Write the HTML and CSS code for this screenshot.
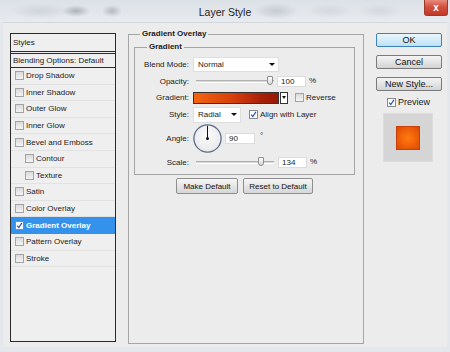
FILE: index.html
```html
<!DOCTYPE html>
<html>
<head>
<meta charset="utf-8">
<title>Layer Style</title>
<link rel="stylesheet" href="styles.css">
</head>
<body>
<div class="window">
  <div class="titlebar">
    <div class="tb-left"></div>
    <div class="title">Layer Style</div>
    <div class="close">x</div>
  </div>
  <div class="body">
    <div class="styles-list">
      <div class="head">Styles</div>
      <div class="blend">Blending Options: Default</div>
      <div class="item"><span class="cb"></span>Drop Shadow</div>
      <div class="item"><span class="cb"></span>Inner Shadow</div>
      <div class="item"><span class="cb"></span>Outer Glow</div>
      <div class="item"><span class="cb"></span>Inner Glow</div>
      <div class="item"><span class="cb"></span>Bevel and Emboss</div>
      <div class="item sub"><span class="cb"></span>Contour</div>
      <div class="item sub"><span class="cb"></span>Texture</div>
      <div class="item"><span class="cb"></span>Satin</div>
      <div class="item"><span class="cb"></span>Color Overlay</div>
      <div class="item sel"><span class="cb on"><svg viewBox="0 0 9 9" width="7" height="7"><path d="M1.5 4.8 L3.6 7.2 L7.6 1.2" fill="none" stroke="#2a4fb0" stroke-width="1.5"/></svg></span>Gradient Overlay</div>
      <div class="item"><span class="cb"></span>Pattern Overlay</div>
      <div class="item"><span class="cb"></span>Stroke</div>
    </div>

    <fieldset class="group outer">
      <legend>Gradient Overlay</legend>
      <fieldset class="group inner">
        <legend>Gradient</legend>
        <div class="frow r1">
          <span class="lbl">Blend Mode:</span>
          <div class="select blendsel"><span>Normal</span><span class="arrow"></span></div>
        </div>
        <div class="frow r2">
          <span class="lbl">Opacity:</span>
          <div class="slider"><span class="thumb" style="left:71px"></span></div>
          <div class="input wnum">100</div>
          <span class="unit">%</span>
        </div>
        <div class="frow r3">
          <span class="lbl">Gradient:</span>
          <div class="swatch"></div>
          <div class="swbtn"><span class="arrow small"></span></div>
          <span class="cb rev"></span><span class="cbtext">Reverse</span>
        </div>
        <div class="frow r4">
          <span class="lbl">Style:</span>
          <div class="select stylesel"><span>Radial</span><span class="arrow"></span></div>
          <span class="cb on align"><svg viewBox="0 0 9 9" width="7" height="7"><path d="M1.5 4.8 L3.6 7.2 L7.6 1.2" fill="none" stroke="#2a4fb0" stroke-width="1.5"/></svg></span><span class="cbtext">Align with Layer</span>
        </div>
        <div class="frow r5">
          <span class="lbl">Angle:</span>
          <svg class="dial" viewBox="0 0 29 29" width="29" height="29">
            <defs>
              <radialGradient id="dg" cx="50%" cy="40%" r="60%">
                <stop offset="0" stop-color="#fbfbfb"/>
                <stop offset="1" stop-color="#e9e9e9"/>
              </radialGradient>
            </defs>
            <circle cx="14.5" cy="14.5" r="13.6" fill="url(#dg)" stroke="#5d6c8c" stroke-width="1.3"/>
            <line x1="14.5" y1="14.5" x2="14.5" y2="1.8" stroke="#111" stroke-width="1"/>
            <circle cx="14.5" cy="14.5" r="1.5" fill="#111"/>
          </svg>
          <div class="input wang">90</div>
          <span class="deg">°</span>
        </div>
        <div class="frow r6">
          <span class="lbl">Scale:</span>
          <div class="slider"><span class="thumb" style="left:62px"></span></div>
          <div class="input wnum sc">134</div>
          <span class="unit">%</span>
        </div>
      </fieldset>
      <div class="btnrow">
        <button class="btn mk">Make Default</button>
        <button class="btn rs">Reset to Default</button>
      </div>
    </fieldset>

    <div class="side">
      <button class="sbtn ok">OK</button>
      <button class="sbtn">Cancel</button>
      <button class="sbtn">New Style...</button>
      <div class="prevrow"><span class="cb on"><svg viewBox="0 0 9 9" width="7" height="7"><path d="M1.5 4.8 L3.6 7.2 L7.6 1.2" fill="none" stroke="#2a4fb0" stroke-width="1.5"/></svg></span><span>Preview</span></div>
      <div class="preview"><div class="psq"></div></div>
    </div>
  </div>
</div>
</body>
</html>
```
FILE: styles.css
```css
* { box-sizing: border-box; }
html, body { margin: 0; padding: 0; }
body {
  width: 450px; height: 352px; overflow: hidden;
  font-family: "Liberation Sans", Arial, sans-serif;
  font-size: 8px; color: #1b1b1b;
  background: #e3e7eb;
}
.window {
  width: 450px; height: 352px;
  display: flex; flex-direction: column;
  padding: 0 3px 5px;
  background: #e4e8ec;
}
.titlebar {
  height: 22px; margin: 0 -3px; flex: none;
  display: grid; grid-template-columns: 1fr auto 1fr; align-items: center;
  background:
    radial-gradient(ellipse 14px 6px at 76px 11px, rgba(150,156,164,.7), rgba(150,156,164,0)),
    radial-gradient(ellipse 10px 6px at 112px 11px, rgba(150,156,164,.6), rgba(150,156,164,0)),
    radial-gradient(ellipse 30px 8px at 40px 11px, rgba(190,196,204,.5), rgba(190,196,204,0)),
    radial-gradient(ellipse 22px 8px at 276px 11px, rgba(175,180,188,.55), rgba(175,180,188,0)),
    radial-gradient(ellipse 22px 7px at 330px 11px, rgba(195,200,206,.45), rgba(195,200,206,0)),
    radial-gradient(ellipse 22px 7px at 380px 11px, rgba(195,200,206,.45), rgba(195,200,206,0)),
    linear-gradient(#dce1e7, #e7ebef);
}
.title { font-size: 10.5px; color: #1e1e1e; padding-top: 1px; }
.close {
  justify-self: end; align-self: start;
  width: 24px; height: 16px; margin-right: 2px;
  background: linear-gradient(#e98a7e, #d3513f 45%, #c23a27);
  border: 1px solid #a0392c; border-top: none;
  border-radius: 0 0 3px 3px;
  color: #fff; font-weight: bold; font-size: 10px; line-height: 1;
  display: flex; align-items: center; justify-content: center;
}
.body {
  flex: 1; display: flex; align-items: flex-start;
  padding: 6px 0 0 7px;
  background: #ececec;
  border-top: 1px solid #d4d8dd;
}

/* styles list */
.styles-list {
  margin-top: 4px; width: 106px; height: 309px; flex: none;
  border: 1px solid #2b2b2b; background: #efefef;
}
.head {
  height: 18px; padding-left: 2px; display: flex; align-items: center;
  border-bottom: 1px solid #2b2b2b;
}
.blend {
  margin-top: 1px; height: 15px; padding-left: 2px; display: flex; align-items: center;
  border-top: 1px solid #2b2b2b; border-bottom: 1px solid #2b2b2b;
}
.item {
  height: 16.6px; display: flex; align-items: center; padding-left: 4px;
  border-bottom: 1px solid #e2e2e2;
}
.item.sub { padding-left: 14px; }
.item.sel { background: #3592ec; color: #fff; font-weight: bold; border-bottom-color: #3592ec; }
.cb {
  width: 9px; height: 9px; flex: none; margin-right: 2px;
  border: 1px solid #a3a3a3;
  background: linear-gradient(#dadada, #f4f4f4);
  display: inline-flex; align-items: center; justify-content: center;
}
.cb.on { background: #fbfbfb; border-color: #8a8a8a; }

/* group boxes */
.group { margin: 0; min-width: 0; border: 1px solid #a6a6a6; }
.group legend { font-weight: bold; line-height: 10px; padding: 0 2px; }
.outer {
  margin-left: 12px; width: 236px; height: 315px; flex: none;
  padding: 3px 8px 0 5px;
}
.outer > legend { margin-left: 6px; }
.inner { width: 221px; height: 133px; padding: 5px 0 2px 0; }
.inner > legend { margin-left: 12px; }

.frow { display: flex; align-items: center; }
.r1 { height: 15px; }
.r2 { height: 18px; }
.r3 { height: 15px; }
.r4 { height: 19px; }
.r5 { height: 29px; }
.r6 { height: 18px; }
.lbl { width: 54px; text-align: right; margin-right: 4px; flex: none; }

.select {
  height: 15px; background: #fff; border: 1px solid #dedede;
  display: flex; align-items: center; justify-content: space-between;
  padding: 0 3px 0 4px;
}
.blendsel { width: 86px; }
.stylesel { width: 48px; height: 16px; }
.arrow {
  width: 0; height: 0;
  border-left: 3px solid transparent; border-right: 3px solid transparent;
  border-top: 3px solid #111;
}
.arrow.small { border-left-width: 2.5px; border-right-width: 2.5px; border-top-width: 3px; }

.slider {
  position: relative; width: 78px; height: 3px; margin-left: 3px;
  border-top: 1px solid #b0b0b0; border-bottom: 1px solid #fff;
  background: #d8d8d8;
}
.thumb {
  position: absolute; top: -5px; width: 6px; height: 9px;
  border: 1px solid #8c8c8c; border-radius: 1px 1px 3px 3px;
  background: linear-gradient(#fdfdfd, #d8d8d8);
}
.input {
  height: 11px; background: #fff; border: 1px solid #dcdcdc;
  padding-left: 3px; display: flex; align-items: center;
}
.wnum { width: 29px; margin-left: 3px; }
.wnum.sc { margin-left: 4px; }
.unit { margin-left: 3px; margin-top: -2px; }
.wang { width: 30px; margin-left: 3px; }
.deg { margin-left: 5px; margin-top: -6px; font-size: 8px; }

.swatch {
  width: 86px; height: 12px; border: 1px solid #333;
  background: linear-gradient(90deg, #f2650f, #d8400c 45%, #a8200a 80%, #981805);
}
.swbtn {
  width: 8px; height: 12px; margin-left: 1px;
  border: 1px solid #333; background: #fff;
  display: flex; align-items: center; justify-content: center;
}
.cb.rev { margin-left: 7px; margin-right: 2px; }
.cb.align { margin-left: 8px; margin-right: 2px; }
.cbtext { white-space: nowrap; }
.dial { flex: none; display: block; }

.btnrow { display: flex; justify-content: center; gap: 5px; margin-top: 3px; }
.btn {
  height: 16px; padding: 0; margin: 0;
  font-family: inherit; font-size: 8px; color: #111;
  border: 1px solid #8e8e8e; border-radius: 2px;
  background: linear-gradient(#f6f6f6, #e6e6e6 50%, #d6d6d6);
}
.btn.mk { width: 62px; }
.btn.rs { width: 70px; }

/* side column */
.side { margin-left: 12px; margin-top: 4px; width: 66px; flex: none; display: flex; flex-direction: column; align-items: stretch; }
.sbtn {
  height: 14px; margin: 0 0 8px; padding: 0;
  font-family: inherit; font-size: 9px; color: #111;
  border: 1px solid #7a7a7a; border-radius: 2px;
  background: linear-gradient(#f4f4f4, #e4e4e4 50%, #d2d2d2);
}
.sbtn.ok { border-color: #3c82bc; background: linear-gradient(#eaf6fd, #d4ecfa 50%, #bde1f5); }
.prevrow {
  height: 14px; margin-top: -4px; padding-left: 11px;
  display: flex; align-items: center; font-size: 9px;
}
.prevrow .cb { margin-right: 2px; }
.preview {
  margin: 4px 0 0 7px; width: 50px; height: 49px;
  background: #d5d5d5; border: 1px solid #dcdcdc;
  display: flex; align-items: center; justify-content: center;
}
.psq {
  width: 24px; height: 24px;
  border: 1px solid #c7400a;
  background: radial-gradient(circle at 50% 50%, #ff7a12, #f06008 55%, #d84806);
}
```
